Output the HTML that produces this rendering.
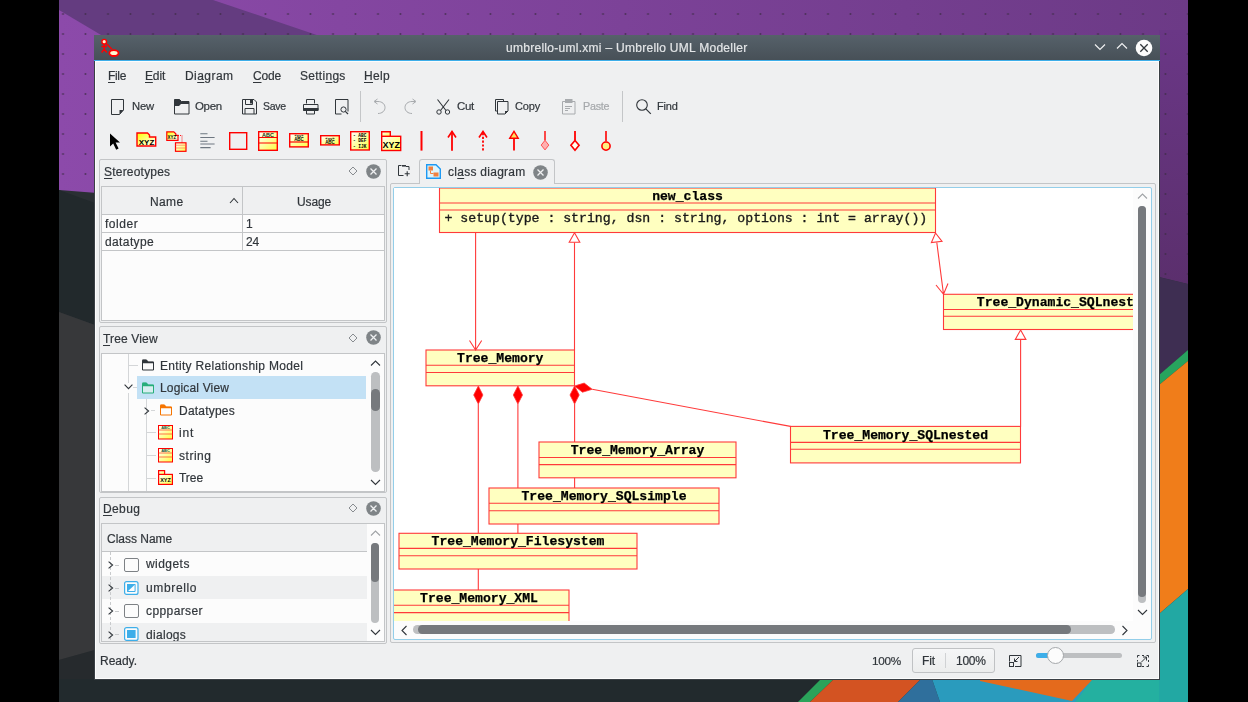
<!DOCTYPE html>
<html><head><meta charset="utf-8">
<style>
*{box-sizing:border-box}
html,body{margin:0;padding:0}
body{width:1248px;height:702px;overflow:hidden;position:relative;background:#000;font-family:"Liberation Sans",sans-serif;color:#31363b}
.a{position:absolute}
.t{position:absolute;white-space:nowrap;line-height:1;font-size:12px;will-change:transform;-webkit-text-stroke:0.2px currentColor}
svg{position:absolute;overflow:visible}
.u{text-decoration:underline;text-decoration-thickness:1px;text-underline-offset:2px}
</style></head><body>
<svg class="a" style="left:0;top:0" width="1248" height="702" viewBox="0 0 1248 702">
  <defs>
    <linearGradient id="gp" x1="0" y1="0" x2="1" y2="0">
      <stop offset="0" stop-color="#8c4aaa"/><stop offset="1" stop-color="#6c3a86"/>
    </linearGradient>
    <pattern id="dots" x="0" y="4" width="22.5" height="20" patternUnits="userSpaceOnUse">
      <circle cx="18" cy="10" r="1" fill="#3a2a44" opacity="0.75"/>
    </pattern>
  </defs>
  <rect x="59" y="0" width="1129" height="702" fill="url(#gp)"/>
  <polygon points="59,0 213,0 420,70 160,70 59,10" fill="#643c80"/>
  <linearGradient id="gr" x1="0" y1="0" x2="0" y2="1"><stop offset="0" stop-color="#6a3786"/><stop offset="1" stop-color="#5b2f6d"/></linearGradient>
  <polygon points="1159,30 1188,30 1188,284 1159,277" fill="url(#gr)"/>
  <rect x="59" y="0" width="1129" height="300" fill="url(#dots)"/>
  <polygon points="59,190 1159,277 1188,284 1188,702 59,702" fill="#2a2f33"/>
  <polygon points="59,190 95,203 95,325 59,312" fill="#22292c"/>
  <polygon points="59,312 95,325 95,650 59,660" fill="#37383a"/>
  <polygon points="59,660 95,650 95,702 59,702" fill="#262a2d"/>
  <polygon points="1159,277 1188,284 1188,350 1159,375" fill="#3e2e52"/>
  <polygon points="1159,375 1188,350 1188,361 1159,385" fill="#27a35e"/>
  <polygon points="1159,385 1188,361 1188,589 1159,614" fill="#f07d1a"/>
  <polygon points="1159,614 1188,589 1188,702 1159,702" fill="#22a8a3"/>
  <polygon points="59,679 821,679 798,702 59,702" fill="#222a2d"/>
  <polygon points="821,679 834,679 810,702 798,702" fill="#2aa35a"/>
  <polygon points="834,679 921,679 898,702 810,702" fill="#d35322"/>
  <polygon points="921,679 932,679 940,702 898,702" fill="#2f6f9c"/>
  <polygon points="932,679 1159,679 1159,702 940,702" fill="#2a9bbd"/>
  <polygon points="980,679 1093,679 1072,701 980,681" fill="#e46a1c"/>
  <polygon points="1093,679 1159,679 1159,702 1075,702" fill="#24b0a0"/>
</svg>
<div class="a" style="left:94px;top:35px;width:1066px;height:645px;background:#eff0f1;border:1px solid #3a3f44;border-top:none;box-shadow:inset 1px -1px 0 #fcfcfc, inset -1px 0 0 #fcfcfc"></div>
<div class="a" style="left:94px;top:35px;width:1066px;height:25px;background:linear-gradient(#56616a,#475057);"></div>
<div class="a" style="left:94px;top:59.5px;width:1066px;height:1.5px;background:#3daee9;"></div>
<div class="a" style="left:95px;top:61px;width:1064px;height:1px;background:#fcfcfc;"></div>
<div class="t" style="left:506.30px;top:42.00px;font-size:12px;color:#e3e5e7;letter-spacing:0.279px;">umbrello-uml.xmi – Umbrello UML Modeller</div>
<svg style="left:98px;top:37px" width="20" height="20" viewBox="0 0 20 20"><circle cx="6.2" cy="4.7" r="2.3" fill="#fff8d0" stroke="#ff0000" stroke-width="1.4"/>
  <path d="M6.2 7v5.5 M3.5 9.5h5.5 M6.2 12.3l-2.6 3.2 M6.2 12.3l2.6 3.2 M8 6.2l6 6" stroke="#ff0000" stroke-width="1.4" fill="none"/>
  <ellipse cx="15.9" cy="16.1" rx="4.6" ry="2.9" fill="#fff8d0" stroke="#ff0000" stroke-width="1.8"/></svg>
<svg style="left:1094px;top:43px" width="12" height="8" viewBox="0 0 12 8"><path d="M1 1.5l5 5 5-5" stroke="#eff0f1" stroke-width="1.2" fill="none"/></svg>
<svg style="left:1116px;top:42px" width="12" height="8" viewBox="0 0 12 8"><path d="M1 6.5l5-5 5 5" stroke="#eff0f1" stroke-width="1.2" fill="none"/></svg>
<svg style="left:1135px;top:39px" width="18" height="18" viewBox="0 0 18 18"><circle cx="9" cy="9" r="8.3" fill="#fcfcfc"/><path d="M5.3 5.3l7.4 7.4 M12.7 5.3l-7.4 7.4" stroke="#31363b" stroke-width="1.3"/></svg>
<div class="t" style="left:107.60px;top:70.00px;font-size:12.0px;letter-spacing:-0.315px;"><span class="u">F</span>ile</div>
<div class="t" style="left:145.40px;top:70.00px;font-size:12px;letter-spacing:-0.157px;"><span class="u">E</span>dit</div>
<div class="t" style="left:185.00px;top:70.00px;font-size:12px;letter-spacing:0.440px;">Di<span class="u">a</span>gram</div>
<div class="t" style="left:252.70px;top:70.00px;font-size:12px;letter-spacing:-0.163px;"><span class="u">C</span>ode</div>
<div class="t" style="left:299.70px;top:70.00px;font-size:12px;letter-spacing:0.279px;">Setti<span class="u">n</span>gs</div>
<div class="t" style="left:363.80px;top:70.00px;font-size:12px;letter-spacing:0.337px;"><span class="u">H</span>elp</div>
<svg style="left:111px;top:99px" width="14" height="16" viewBox="0 0 14 16"><path d="M0.5 0.5h12v10.5l-4 4.5h-8z" fill="none" stroke="#31363b"/><path d="M12.5 11l-4 4.5v-4.5z" fill="#31363b"/></svg>
<div class="t" style="left:131.70px;top:101.00px;font-size:11.25px;letter-spacing:-0.200px;">New</div>
<svg style="left:174px;top:99px" width="16" height="16" viewBox="0 0 16 16"><path d="M0.5 0.5h5l2 2h7.5v12.5h-14.5z" fill="none" stroke="#31363b"/><path d="M0.5 0.5h5l2 2h7.5v2.5h-8l-2 2h-4.5z" fill="#31363b"/></svg>
<div class="t" style="left:195.40px;top:101.00px;font-size:11.5px;letter-spacing:-0.336px;">Open</div>
<svg style="left:242px;top:99px" width="16" height="16" viewBox="0 0 16 16"><path d="M0.5 0.5h11.5l2.5 2.5v12h-14z" fill="none" stroke="#31363b"/><path d="M3.5 0.5v5h7v-5 M3 15v-5.5h9v5.5" fill="none" stroke="#31363b"/><rect x="8" y="1" width="2" height="3.5" fill="#31363b"/></svg>
<div class="t" style="left:263.00px;top:101.00px;font-size:10.5px;letter-spacing:-0.312px;">Save</div>
<svg style="left:303px;top:99px" width="16" height="16" viewBox="0 0 16 16"><path d="M3.5 4.5v-4h8v4" fill="none" stroke="#31363b"/><path d="M0.5 5.5h14.5v6h-14.5z" fill="none" stroke="#31363b"/><rect x="0" y="9" width="15.5" height="2.5" fill="#31363b"/><path d="M3.5 11.5v3.5h8v-3.5" fill="none" stroke="#31363b"/></svg>
<svg style="left:334.5px;top:99px" width="14" height="16" viewBox="0 0 14 16"><path d="M0.5 0.5h12.5v12 M0.5 0.5v14.5h6" fill="none" stroke="#31363b"/><circle cx="8.5" cy="10.5" r="2.6" fill="none" stroke="#31363b"/><path d="M10.3 12.3l2.7 2.7" stroke="#31363b" stroke-width="1.2"/></svg>
<div class="a" style="left:360px;top:91px;width:1px;height:31px;background:#c4c6c8;"></div>
<svg style="left:373px;top:99px" width="14" height="16" viewBox="0 0 14 16"><path d="M5 14.5c4 0 7-2.5 7-6s-3-6-7-6h-3" fill="none" stroke="#a8abae"/><path d="M4.5 0l-3.5 2.5 3.5 2.5" fill="none" stroke="#a8abae"/></svg>
<svg style="left:403px;top:99px" width="14" height="16" viewBox="0 0 14 16"><path d="M9 14.5c-4 0-7-2.5-7-6s3-6 7-6h3" fill="none" stroke="#a8abae"/><path d="M9.5 0l3.5 2.5-3.5 2.5" fill="none" stroke="#a8abae"/></svg>
<svg style="left:436px;top:99px" width="15" height="16" viewBox="0 0 15 16"><path d="M1.5 0.5l8.5 11 M13 0.5l-8.5 11" fill="none" stroke="#31363b" stroke-width="1.1"/><circle cx="3" cy="13" r="2.2" fill="none" stroke="#31363b"/><circle cx="11.5" cy="13" r="2.2" fill="none" stroke="#31363b"/></svg>
<div class="t" style="left:456.70px;top:101.00px;font-size:11.5px;letter-spacing:-0.295px;">Cut</div>
<svg style="left:495px;top:99px" width="15" height="16" viewBox="0 0 15 16"><path d="M0.5 0.5h8v2 M0.5 0.5v11.5h2" fill="none" stroke="#31363b"/><path d="M2.5 2.5h10.5v9.5l-3 3h-7.5z" fill="#eff0f1" stroke="#31363b"/><path d="M13 12l-3 3v-3z" fill="#31363b"/></svg>
<div class="t" style="left:515.40px;top:101.00px;font-size:11.0px;letter-spacing:-0.163px;">Copy</div>
<svg style="left:561.5px;top:99px" width="14" height="16" viewBox="0 0 14 16"><path d="M0.5 2.5h12.5v12.5h-12.5z" fill="none" stroke="#a8abae"/><rect x="3" y="0" width="7.5" height="4" fill="#a8abae"/><path d="M3 7.5h7 M3 9.5h5 M3 11.5h3" stroke="#a8abae"/></svg>
<div class="t" style="left:582.70px;top:101.00px;font-size:10.75px;color:#a5a8ab;letter-spacing:-0.250px;">Paste</div>
<div class="a" style="left:622px;top:91px;width:1px;height:31px;background:#c4c6c8;"></div>
<svg style="left:635.5px;top:99px" width="16" height="16" viewBox="0 0 16 16"><circle cx="6" cy="6" r="5.3" fill="none" stroke="#31363b" stroke-width="1.1"/><path d="M9.8 9.8l5 5" stroke="#31363b" stroke-width="1.2"/></svg>
<div class="t" style="left:657.40px;top:101.00px;font-size:11.0px;letter-spacing:-0.202px;">Find</div>
<svg style="left:0;top:0" width="0" height="0"><defs><linearGradient id="yg" x1="0" y1="0" x2="1" y2="1"><stop offset="0" stop-color="#ffff00"/><stop offset="0.6" stop-color="#ffffa0"/><stop offset="1" stop-color="#ffffff"/></linearGradient><linearGradient id="yg2" x1="0" y1="0" x2="1" y2="1"><stop offset="0" stop-color="#ffffff"/><stop offset="1" stop-color="#ffff40"/></linearGradient></defs></svg>
<svg style="left:109px;top:133px" width="12" height="17" viewBox="0 0 12 17"><path d="M1 0.5v13l3.2-3 3 6.3 2.4-1.2-3-6h4.4z" fill="#000"/></svg>
<svg style="left:135.5px;top:132px" width="21" height="15" viewBox="0 0 21 15"><path d="M1 1h10.5l2 2v2h6.2v9h-18.7z" fill="url(#yg)" stroke="#ff0000" stroke-width="1.4"/><text x="10.5" y="12.6" font-family="Liberation Sans" font-weight="bold" font-size="8" text-anchor="middle" fill="#000">XYZ</text></svg>
<svg style="left:166px;top:130.5px" width="21" height="21" viewBox="0 0 21 21"><path d="M0.8 0.8h7l2 2v1.5h2.2v5h-11.2z" fill="url(#yg)" stroke="#ff0000" stroke-width="1.2"/><text x="6" y="8.3" font-family="Liberation Sans" font-weight="bold" font-size="4.5" text-anchor="middle" fill="#000">XYZ</text><path d="M12 4.5h4v7" stroke="#ff0000" stroke-width="0.9" stroke-dasharray="1,1" fill="none"/><rect x="9.5" y="11.8" width="10.5" height="8.5" fill="url(#yg2)" stroke="#ff0000" stroke-width="1.2"/><path d="M9.5 14.2h10.5 M9.5 17h10.5" stroke="#ff6040" stroke-width="0.6"/></svg>
<svg style="left:199.5px;top:133px" width="15" height="16" viewBox="0 0 15 16"><path d="M0.3 0.8h7.2 M0.3 4.5h14.3 M0.3 8.2h7.2 M0.3 11h14.3 M0.3 14.6h10.3" stroke="#6e7781" stroke-width="1.1"/></svg>
<svg style="left:228.5px;top:132px" width="18.5" height="18" viewBox="0 0 18.5 18"><rect x="0.7" y="0.7" width="17" height="16.6" fill="none" stroke="#ff0000" stroke-width="1.4"/></svg>
<svg style="left:258px;top:131px" width="20" height="20" viewBox="0 0 20 20"><rect x="0.7" y="0.7" width="18.6" height="18.6" fill="url(#yg2)" stroke="#ff0000" stroke-width="1.4"/><path d="M0.7 6.5h18.6 M0.7 12h18.6" stroke="#ff0000" stroke-width="1.2"/><text x="10" y="5.6" font-family="Liberation Sans" font-weight="bold" font-size="5.5" text-anchor="middle" fill="#203020">ABC</text></svg>
<svg style="left:289px;top:133.3px" width="20" height="14.6" viewBox="0 0 20 14.6"><rect x="0.7" y="0.7" width="18.6" height="13.2" fill="url(#yg2)" stroke="#ff0000" stroke-width="1.4"/><path d="M0.7 9h18.6" stroke="#ff0000" stroke-width="1.2"/><text x="10" y="4.2" font-family="Liberation Sans" font-weight="bold" font-size="4" text-anchor="middle" fill="#000">«xy»</text><text x="10" y="8" font-family="Liberation Sans" font-weight="bold" font-size="4.5" text-anchor="middle" fill="#000">ABC</text></svg>
<svg style="left:319.5px;top:135.2px" width="20" height="10.6" viewBox="0 0 20 10.6"><rect x="0.7" y="0.7" width="18.6" height="9.2" fill="url(#yg2)" stroke="#ff0000" stroke-width="1.4"/><text x="10" y="4.6" font-family="Liberation Sans" font-weight="bold" font-size="4.2" text-anchor="middle" fill="#000">«xy»</text><text x="10" y="8.7" font-family="Liberation Sans" font-weight="bold" font-size="4.5" text-anchor="middle" fill="#000">ABC</text></svg>
<svg style="left:350.2px;top:131px" width="20" height="19.7" viewBox="0 0 20 19.7"><rect x="0.7" y="0.7" width="18.6" height="18.3" fill="url(#yg2)" stroke="#ff0000" stroke-width="1.4"/><text x="3" y="6" font-family="Liberation Mono" font-weight="bold" font-size="4.5" fill="#000">-  ABC</text><text x="3" y="11.5" font-family="Liberation Mono" font-weight="bold" font-size="4.5" fill="#000">-  DEF</text><text x="3" y="17" font-family="Liberation Mono" font-weight="bold" font-size="4.5" fill="#000">-  IJK</text></svg>
<svg style="left:381px;top:131px" width="20" height="20" viewBox="0 0 20 20"><path d="M0.7 5.4v-4.7h8.6v4.7" fill="url(#yg2)" stroke="#ff0000" stroke-width="1.4"/><rect x="0.7" y="5.3" width="19" height="14.2" fill="url(#yg2)" stroke="#ff0000" stroke-width="1.4"/><text x="10.3" y="16.8" font-family="Liberation Sans" font-weight="bold" font-size="9" text-anchor="middle" fill="#000">XYZ</text></svg>
<svg style="left:416px;top:130px" width="12" height="22" viewBox="0 0 12 22"><path d="M5.5 1v19.6" stroke="#ff0000" stroke-width="2"/></svg>
<svg style="left:446px;top:130px" width="12" height="22" viewBox="0 0 12 22"><path d="M6 1.5v19.2" stroke="#ff0000" stroke-width="1.8"/><path d="M2 7.5l4-6 4 6" stroke="#ff0000" stroke-width="1.6" fill="none"/></svg>
<svg style="left:477px;top:130px" width="12" height="22" viewBox="0 0 12 22"><path d="M6 3v17.6" stroke="#ff0000" stroke-width="1.8" stroke-dasharray="2.2,1.6"/><path d="M2 7.5l4-6 4 6" stroke="#ff0000" stroke-width="1.6" fill="none"/></svg>
<svg style="left:507.5px;top:130px" width="12" height="22" viewBox="0 0 12 22"><path d="M6 8v12.6" stroke="#ff0000" stroke-width="1.8"/><path d="M1.8 8.2l4.2-6.8 4.2 6.8z" stroke="#ff0000" stroke-width="1.4" fill="#ffe060"/></svg>
<svg style="left:538.5px;top:130px" width="12" height="22" viewBox="0 0 12 22"><path d="M6 1v9.5" stroke="#ff0000" stroke-width="1.4"/><path d="M6 10.3l3.8 4.8-3.8 4.8-3.8-4.8z" stroke="#ff5050" stroke-width="1" fill="#ffb0b0"/></svg>
<svg style="left:569px;top:130px" width="12" height="22" viewBox="0 0 12 22"><path d="M6 1v9.5" stroke="#ff0000" stroke-width="1.8"/><path d="M6 10.4l4.1 4.9-4.1 4.9-4.1-4.9z" stroke="#ff0000" stroke-width="1.6" fill="#fffff0"/></svg>
<svg style="left:599.5px;top:130px" width="12" height="22" viewBox="0 0 12 22"><path d="M6 1v10.5" stroke="#ff0000" stroke-width="1.6"/><circle cx="6" cy="16.1" r="4.1" stroke="#ff0000" stroke-width="1.6" fill="#fff080"/></svg>
<div class="a" style="left:99px;top:159px;width:288px;height:164px;background:#eff0f1;border:1px solid #c3c5c7;border-radius:2px"></div>
<div class="t" style="left:103.70px;top:166.00px;font-size:12px;letter-spacing:0.208px;"><span class="u">S</span>tereotypes</div>
<svg style="left:347.7px;top:166px" width="10" height="10" viewBox="0 0 10 10"><path d="M5 1l4 4-4 4-4-4z" fill="none" stroke="#888c90" stroke-width="1"/></svg>
<svg style="left:366.3px;top:163.5px" width="15" height="15" viewBox="0 0 15 15"><circle cx="7.5" cy="7.5" r="7.3" fill="#7f8487"/><path d="M4.5 4.5l6 6 M10.5 4.5l-6 6" stroke="#eff0f1" stroke-width="1.3"/></svg>
<div class="a" style="left:101px;top:186px;width:284px;height:135px;background:#fcfcfc;border:1px solid #c3c5c7"></div>
<div class="a" style="left:102px;top:187px;width:282px;height:28px;background:#eff0f1;border-bottom:1px solid #c3c5c7"></div>
<div class="a" style="left:242px;top:187px;width:1px;height:64px;background:#c3c5c7;"></div>
<div class="a" style="left:102px;top:232px;width:282px;height:1px;background:#c3c5c7;"></div>
<div class="a" style="left:102px;top:250px;width:282px;height:1px;background:#c3c5c7;"></div>
<div class="t" style="left:149.50px;top:196.00px;font-size:12px;letter-spacing:0.361px;">Name</div>
<svg style="left:228.5px;top:197px" width="10" height="7" viewBox="0 0 10 7"><path d="M1 6l4-4.5 4 4.5" fill="none" stroke="#31363b" stroke-width="1.1"/></svg>
<div class="t" style="left:296.50px;top:196.00px;font-size:12px;letter-spacing:-0.122px;">Usage</div>
<div class="t" style="left:104.60px;top:218.00px;font-size:12px;letter-spacing:0.537px;">folder</div>
<div class="t" style="left:245.90px;top:218.00px;font-size:12px;">1</div>
<div class="t" style="left:104.60px;top:236.00px;font-size:12px;letter-spacing:0.383px;">datatype</div>
<div class="t" style="left:245.90px;top:236.00px;font-size:12px;letter-spacing:-0.144px;">24</div>
<div class="a" style="left:99px;top:326px;width:288px;height:167px;background:#eff0f1;border:1px solid #c3c5c7;border-radius:2px"></div>
<div class="t" style="left:103.40px;top:333.00px;font-size:12px;letter-spacing:0.155px;"><span class="u">T</span>ree View</div>
<svg style="left:347.7px;top:332.5px" width="10" height="10" viewBox="0 0 10 10"><path d="M5 1l4 4-4 4-4-4z" fill="none" stroke="#888c90" stroke-width="1"/></svg>
<svg style="left:366.3px;top:330.0px" width="15" height="15" viewBox="0 0 15 15"><circle cx="7.5" cy="7.5" r="7.3" fill="#7f8487"/><path d="M4.5 4.5l6 6 M10.5 4.5l-6 6" stroke="#eff0f1" stroke-width="1.3"/></svg>
<div class="a" style="left:101px;top:353px;width:284px;height:139px;background:#fcfcfc;border:1px solid #c3c5c7"></div>
<div class="a" style="left:128px;top:353.5px;width:1px;height:29px;background:#d4d6d8;"></div>
<div class="a" style="left:128px;top:393px;width:1px;height:98px;background:#d4d6d8;"></div>
<div class="a" style="left:128.5px;top:364.5px;width:9px;height:1px;background:#d4d6d8;"></div>
<div class="a" style="left:146px;top:399px;width:1px;height:92px;background:#d4d6d8;"></div>
<div class="a" style="left:146.5px;top:432px;width:9px;height:1px;background:#d4d6d8;"></div>
<div class="a" style="left:146.5px;top:455px;width:9px;height:1px;background:#d4d6d8;"></div>
<div class="a" style="left:146.5px;top:477.5px;width:9px;height:1px;background:#d4d6d8;"></div>
<div class="a" style="left:151px;top:410px;width:4px;height:1px;background:#d4d6d8;"></div>
<div class="a" style="left:133px;top:387px;width:4px;height:1px;background:#d4d6d8;"></div>
<div class="a" style="left:137.3px;top:376.3px;width:229px;height:22.4px;background:#c3e1f5;"></div>
<svg style="left:141.5px;top:359px" width="12" height="12" viewBox="0 0 12 12"><path d="M0.5 1.5v9.5h11v-8h-5.5l-1.5-2h-4z" fill="none" stroke="#31363b"/><path d="M0.5 0.8h4l1.5 2h5.5v1.5h-11z" fill="#31363b"/></svg>
<div class="t" style="left:160.30px;top:360.00px;font-size:12px;letter-spacing:0.313px;">Entity Relationship Model</div>
<svg style="left:124px;top:384px" width="9" height="6" viewBox="0 0 9 6"><path d="M0.6 0.6l3.9 4 3.9-4" fill="none" stroke="#31363b" stroke-width="1.1"/></svg>
<svg style="left:141.5px;top:382px" width="12" height="12" viewBox="0 0 12 12"><path d="M0.5 1.5v9.5h11v-8h-5.5l-1.5-2h-4z" fill="#d8eef0" stroke="#27ae7a"/><path d="M0.5 0.8h4l1.5 2h5.5v1.5h-11z" fill="#27ae7a"/></svg>
<div class="t" style="left:160.30px;top:382.00px;font-size:12px;letter-spacing:0.159px;">Logical View</div>
<svg style="left:143.5px;top:406.5px" width="6" height="8" viewBox="0 0 6 8"><path d="M0.6 0.6l4 3.4-4 3.4" fill="none" stroke="#31363b" stroke-width="1.1"/></svg>
<svg style="left:159.5px;top:404px" width="12" height="12" viewBox="0 0 12 12"><path d="M0.5 1.5v9.5h11v-8h-5.5l-1.5-2h-4z" fill="#fcfcfc" stroke="#f67400"/><path d="M0.5 0.8h4l1.5 2h5.5v1.5h-11z" fill="#f67400"/></svg>
<div class="t" style="left:178.50px;top:405.00px;font-size:12px;letter-spacing:0.211px;">Datatypes</div>
<svg style="left:158px;top:425px" width="15" height="14.5" viewBox="0 0 15 14.5"><rect x="0.5" y="0.5" width="14" height="13.5" fill="url(#yg2)" stroke="#ff0000" stroke-width="1"/><path d="M0.6 5h13.8 M0.6 9h13.8" stroke="#ff5030" stroke-width="0.8"/><text x="7.5" y="4.3" font-family="Liberation Sans" font-weight="bold" font-size="4" text-anchor="middle" fill="#205040">ABC</text></svg>
<div class="t" style="left:178.50px;top:427.00px;font-size:12px;letter-spacing:0.814px;">int</div>
<svg style="left:158px;top:447.5px" width="15" height="14.5" viewBox="0 0 15 14.5"><rect x="0.5" y="0.5" width="14" height="13.5" fill="url(#yg2)" stroke="#ff0000" stroke-width="1"/><path d="M0.6 5h13.8 M0.6 9h13.8" stroke="#ff5030" stroke-width="0.8"/><text x="7.5" y="4.3" font-family="Liberation Sans" font-weight="bold" font-size="4" text-anchor="middle" fill="#205040">ABC</text></svg>
<div class="t" style="left:178.50px;top:450.00px;font-size:12px;letter-spacing:0.531px;">string</div>
<svg style="left:158px;top:470px" width="15" height="15" viewBox="0 0 15 15"><path d="M0.6 4.5v-3.9h6v3.9" fill="url(#yg2)" stroke="#ff0000" stroke-width="1.2"/><rect x="0.6" y="4.4" width="13.8" height="10" fill="url(#yg2)" stroke="#ff0000" stroke-width="1.2"/><text x="7.5" y="12.3" font-family="Liberation Sans" font-weight="bold" font-size="5.5" text-anchor="middle" fill="#000">XYZ</text></svg>
<div class="t" style="left:178.50px;top:472.00px;font-size:12px;letter-spacing:-0.011px;">Tree</div>
<svg style="left:370px;top:359.5px" width="11" height="7" viewBox="0 0 11 7"><path d="M1 5.5l4.5-4.5 4.5 4.5" fill="none" stroke="#31363b" stroke-width="1.1"/></svg>
<div class="a" style="left:371.2px;top:372.4px;width:8.6px;height:100px;background:#bdbfc1;border-radius:4.3px"></div>
<div class="a" style="left:371.2px;top:388.6px;width:8.6px;height:22.4px;background:#76797d;border-radius:4.3px"></div>
<svg style="left:370px;top:479px" width="11" height="7" viewBox="0 0 11 7"><path d="M1 1l4.5 4.5 4.5-4.5" fill="none" stroke="#31363b" stroke-width="1.1"/></svg>
<div class="a" style="left:99px;top:497px;width:288px;height:147px;background:#eff0f1;border:1px solid #c3c5c7;border-radius:2px"></div>
<div class="t" style="left:103.40px;top:503.00px;font-size:12px;letter-spacing:0.385px;"><span class="u">D</span>ebug</div>
<svg style="left:347.8px;top:503.2px" width="10" height="10" viewBox="0 0 10 10"><path d="M5 1l4 4-4 4-4-4z" fill="none" stroke="#888c90" stroke-width="1"/></svg>
<svg style="left:366.2px;top:500.7px" width="15" height="15" viewBox="0 0 15 15"><circle cx="7.5" cy="7.5" r="7.3" fill="#7f8487"/><path d="M4.5 4.5l6 6 M10.5 4.5l-6 6" stroke="#eff0f1" stroke-width="1.3"/></svg>
<div class="a" style="left:101px;top:523px;width:284px;height:119px;background:#fcfcfc;border:1px solid #c3c5c7"></div>
<div class="a" style="left:102px;top:524px;width:265px;height:28px;background:#eff0f1;border-bottom:1px solid #c3c5c7"></div>
<div class="t" style="left:106.90px;top:533.00px;font-size:12px;letter-spacing:-0.007px;">Class Name</div>
<div class="a" style="left:102px;top:576px;width:265px;height:23px;background:#eff0f1;"></div>
<div class="a" style="left:102px;top:623px;width:265px;height:18px;background:#eff0f1;"></div>
<div class="a" style="left:109.5px;top:552px;width:1px;height:88px;background:repeating-linear-gradient(#c8cacc 0 3px,transparent 3px 5px);"></div>
<svg style="left:107.5px;top:561.0px" width="6" height="8" viewBox="0 0 6 8"><path d="M0.6 0.6l4 3.4-4 3.4" fill="none" stroke="#31363b" stroke-width="1.1"/></svg>
<div class="a" style="left:115px;top:564.6px;width:4px;height:1px;background:#c8cacc;"></div>
<div class="a" style="left:124px;top:557.6px;width:14.6px;height:14px;background:#fcfcfc;border:1px solid #7d8185;border-radius:2px"></div>
<svg style="left:107.5px;top:584.1999999999999px" width="6" height="8" viewBox="0 0 6 8"><path d="M0.6 0.6l4 3.4-4 3.4" fill="none" stroke="#31363b" stroke-width="1.1"/></svg>
<div class="a" style="left:115px;top:587.8px;width:4px;height:1px;background:#c8cacc;"></div>
<svg style="left:124px;top:580.8px" width="15" height="14" viewBox="0 0 15 14"><rect x="0.6" y="0.6" width="13.4" height="12.8" rx="2" fill="#fcfcfc" stroke="#3daee9" stroke-width="1.2"/><path d="M3 3h8.6l-8.6 8z" fill="#3daee9"/><path d="M3.5 3.5h7.6v7h-7.6z" fill="none" stroke="#3daee9" stroke-width="1"/></svg>
<svg style="left:107.5px;top:607.4px" width="6" height="8" viewBox="0 0 6 8"><path d="M0.6 0.6l4 3.4-4 3.4" fill="none" stroke="#31363b" stroke-width="1.1"/></svg>
<div class="a" style="left:115px;top:611px;width:4px;height:1px;background:#c8cacc;"></div>
<div class="a" style="left:124px;top:604px;width:14.6px;height:14px;background:#fcfcfc;border:1px solid #7d8185;border-radius:2px"></div>
<svg style="left:107.5px;top:630.6px" width="6" height="8" viewBox="0 0 6 8"><path d="M0.6 0.6l4 3.4-4 3.4" fill="none" stroke="#31363b" stroke-width="1.1"/></svg>
<div class="a" style="left:115px;top:634.2px;width:4px;height:1px;background:#c8cacc;"></div>
<svg style="left:124px;top:627.2px" width="15" height="14" viewBox="0 0 15 14"><rect x="0.6" y="0.6" width="13.4" height="12.8" rx="2" fill="#fcfcfc" stroke="#3daee9" stroke-width="1.2"/><rect x="3" y="3" width="8.6" height="8" fill="#3daee9"/></svg>
<div class="t" style="left:146.00px;top:558.00px;font-size:12px;letter-spacing:0.452px;">widgets</div>
<div class="t" style="left:146.00px;top:582.00px;font-size:12px;letter-spacing:0.638px;">umbrello</div>
<div class="t" style="left:146.00px;top:605.00px;font-size:12px;letter-spacing:0.405px;">cppparser</div>
<div class="a" style="left:102px;top:625px;width:200px;height:15.5px;overflow:hidden">
<div class="t" style="left:44px;top:4.14px;font-size:12px;letter-spacing:0.3px">dialogs</div></div>
<svg style="left:370px;top:529.5px" width="11" height="7" viewBox="0 0 11 7"><path d="M1 5.5l4.5-4.5 4.5 4.5" fill="none" stroke="#a0a3a6" stroke-width="1.1"/></svg>
<div class="a" style="left:370.7px;top:542.5px;width:8.6px;height:80px;background:#bdbfc1;border-radius:4.3px"></div>
<div class="a" style="left:370.7px;top:542.5px;width:8.6px;height:39px;background:#76797d;border-radius:4.3px"></div>
<svg style="left:370px;top:629px" width="11" height="7" viewBox="0 0 11 7"><path d="M1 1l4.5 4.5 4.5-4.5" fill="none" stroke="#31363b" stroke-width="1.1"/></svg>
<div class="t" style="left:99.70px;top:655.00px;font-size:12px;letter-spacing:-0.025px;">Ready.</div>
<div class="t" style="left:872.00px;top:655.00px;font-size:11.75px;letter-spacing:-0.249px;">100%</div>
<div class="a" style="left:912.4px;top:648px;width:82.5px;height:24.6px;background:linear-gradient(#f5f6f7,#eceded);border:1px solid #c0c2c4;border-radius:3px"></div>
<div class="a" style="left:944.5px;top:653px;width:1px;height:15px;background:#d0d2d4;"></div>
<div class="t" style="left:922.00px;top:655.00px;font-size:12px;letter-spacing:-0.164px;">Fit</div>
<div class="t" style="left:955.70px;top:655.00px;font-size:12.0px;letter-spacing:-0.296px;">100%</div>
<svg style="left:1008.5px;top:654.5px" width="13" height="12" viewBox="0 0 13 12"><path d="M0.5 0.5h11.5v11h-6 M0.5 0.5v6" fill="none" stroke="#31363b"/><rect x="0.5" y="7.5" width="4" height="4" fill="none" stroke="#31363b"/><path d="M10 2l-4.5 4.5 M5.5 3.5v3h3" fill="none" stroke="#31363b"/></svg>
<div class="a" style="left:1035.5px;top:653.2px;width:86.5px;height:5.3px;background:#bdbfc1;border-radius:2.7px"></div>
<div class="a" style="left:1035.5px;top:653.2px;width:20px;height:5.3px;background:#3daee9;border-radius:2.7px"></div>
<svg style="left:1046.5px;top:647.3px" width="17" height="17" viewBox="0 0 17 17"><circle cx="8.5" cy="8.5" r="8" fill="#fcfcfc" stroke="#a5a8ab" stroke-width="1"/></svg>
<svg style="left:1137px;top:654.5px" width="12" height="12" viewBox="0 0 12 12"><path d="M0.5 2.5v-2h2 M5 0.5h2 M9.5 0.5h2v2 M11.5 5v2 M11.5 9.5v2h-2 M7 11.5h-2 M0.5 5v1.5" fill="none" stroke="#31363b"/><rect x="0.5" y="8" width="3.5" height="3.5" fill="none" stroke="#31363b"/><path d="M4.5 7l5-5 M9.5 5.5v-3.5h-3.5" fill="none" stroke="#31363b"/></svg>
<div class="a" style="left:419px;top:159px;width:136px;height:25px;background:#eff0f1;border:1px solid #c3c5c7;border-bottom:none;border-radius:3px 3px 0 0"></div>
<svg style="left:397.5px;top:165px" width="13" height="12" viewBox="0 0 13 12"><path d="M3.5 0.5h-3v10h5" fill="none" stroke="#31363b"/><rect x="4" y="0" width="4" height="1.6" fill="#31363b"/><path d="M8 1.5h3v3.5" fill="none" stroke="#31363b"/><path d="M9.2 6.3v5 M6.7 8.8h5" stroke="#31363b" stroke-width="1.1"/></svg>
<svg style="left:426px;top:163.5px" width="15" height="15" viewBox="0 0 15 15"><path d="M0.7 0.7h9.3l4.3 4.3v9.3h-13.6z" fill="#dff4fb" stroke="#1d99f3" stroke-width="1.4"/><rect x="2.5" y="2.5" width="4.5" height="4" fill="#f08040"/><rect x="7.5" y="8.5" width="5" height="4" fill="#f08040"/><path d="M4.5 6.5v3h3" stroke="#f08040" fill="none"/></svg>
<div class="t" style="left:447.80px;top:166.00px;font-size:12px;letter-spacing:0.272px;">cl<span class="u">a</span>ss diagram</div>
<svg style="left:532.9px;top:164.5px" width="15" height="15" viewBox="0 0 15 15"><circle cx="7.5" cy="7.5" r="7.3" fill="#7f8487"/><path d="M4.5 4.5l6 6 M10.5 4.5l-6 6" stroke="#eff0f1" stroke-width="1.3"/></svg>
<div class="a" style="left:390px;top:183px;width:766px;height:460px;background:#eff0f1;border:1px solid #c3c5c7;border-radius:2px"></div>
<div class="a" style="left:420px;top:182px;width:134px;height:2px;background:#eff0f1;"></div>
<div class="a" style="left:393px;top:187px;width:759px;height:453px;background:#fcfcfc;border:1px solid #93cee9;border-radius:2px"></div>
<div class="a" style="left:394px;top:188px;width:739px;height:433px;background:#ffffff;"></div>
<svg style="left:1136.5px;top:193px" width="11" height="7" viewBox="0 0 11 7"><path d="M1 5.5l4.5-4.5 4.5 4.5" fill="none" stroke="#a0a3a6" stroke-width="1.1"/></svg>
<div class="a" style="left:1137.8px;top:206px;width:8.6px;height:396.5px;background:#bdbfc1;border-radius:4.3px"></div>
<div class="a" style="left:1137.8px;top:206px;width:8.6px;height:390.5px;background:#76797d;border-radius:4.3px"></div>
<svg style="left:1136.5px;top:608.5px" width="11" height="7" viewBox="0 0 11 7"><path d="M1 1l4.5 4.5 4.5-4.5" fill="none" stroke="#31363b" stroke-width="1.1"/></svg>
<svg style="left:400.5px;top:624.5px" width="7" height="11" viewBox="0 0 7 11"><path d="M5.5 1l-4.5 4.5 4.5 4.5" fill="none" stroke="#31363b" stroke-width="1.1"/></svg>
<div class="a" style="left:412.8px;top:625.4px;width:702px;height:8.5px;background:#bdbfc1;border-radius:4.3px"></div>
<div class="a" style="left:418px;top:625.4px;width:653.4px;height:8.5px;background:#76797d;border-radius:4.3px"></div>
<svg style="left:1121px;top:624.5px" width="7" height="11" viewBox="0 0 7 11"><path d="M1.5 1l4.5 4.5-4.5 4.5" fill="none" stroke="#31363b" stroke-width="1.1"/></svg>
<svg style="left:0;top:0" width="1248" height="702" viewBox="0 0 1248 702"><defs><clipPath id="cv"><rect x="394" y="188" width="739" height="433"/></clipPath></defs><g clip-path="url(#cv)"><rect x="439.5" y="188" width="496.0" height="44.5" fill="#ffffc0" stroke="#ff3a3a" stroke-width="1.1"/><path d="M439.5 203H935.5 M439.5 210H935.5" stroke="#ff3a3a" stroke-width="1.1"/><text x="687.5" y="199.6" text-anchor="middle" font-family="Liberation Mono" font-weight="bold" font-size="13.1" fill="#000" stroke="#000" stroke-width="0.25">new_class</text><text x="444.5" y="222" font-family="Liberation Mono" font-size="13.2" fill="#1a1a1a" stroke="#1a1a1a" stroke-width="0.35">+ setup(type : string, dsn : string, options : int = array())</text><rect x="943.5" y="294.3" width="239.5" height="35.19999999999999" fill="#ffffc0" stroke="#ff3a3a" stroke-width="1.1"/><path d="M943.5 309.5H1183 M943.5 316.2H1183" stroke="#ff3a3a" stroke-width="1.1"/><text x="1063.25" y="306.1" text-anchor="middle" font-family="Liberation Mono" font-weight="bold" font-size="13.1" fill="#000" stroke="#000" stroke-width="0.25">Tree_Dynamic_SQLnested</text><rect x="426" y="350" width="148.5" height="35.80000000000001" fill="#ffffc0" stroke="#ff3a3a" stroke-width="1.1"/><path d="M426 365.3H574.5 M426 372.5H574.5" stroke="#ff3a3a" stroke-width="1.1"/><text x="500.25" y="361.90000000000003" text-anchor="middle" font-family="Liberation Mono" font-weight="bold" font-size="13.1" fill="#000" stroke="#000" stroke-width="0.25">Tree_Memory</text><rect x="790.5" y="426.4" width="230.0" height="36.5" fill="#ffffc0" stroke="#ff3a3a" stroke-width="1.1"/><path d="M790.5 442.4H1020.5 M790.5 449.2H1020.5" stroke="#ff3a3a" stroke-width="1.1"/><text x="905.5" y="439.0" text-anchor="middle" font-family="Liberation Mono" font-weight="bold" font-size="13.1" fill="#000" stroke="#000" stroke-width="0.25">Tree_Memory_SQLnested</text><rect x="539" y="442" width="197" height="35.80000000000001" fill="#ffffc0" stroke="#ff3a3a" stroke-width="1.1"/><path d="M539 457.5H736 M539 464.6H736" stroke="#ff3a3a" stroke-width="1.1"/><text x="637.5" y="454.1" text-anchor="middle" font-family="Liberation Mono" font-weight="bold" font-size="13.1" fill="#000" stroke="#000" stroke-width="0.25">Tree_Memory_Array</text><rect x="489" y="488" width="230" height="36" fill="#ffffc0" stroke="#ff3a3a" stroke-width="1.1"/><path d="M489 503.2H719 M489 510.8H719" stroke="#ff3a3a" stroke-width="1.1"/><text x="604.0" y="499.8" text-anchor="middle" font-family="Liberation Mono" font-weight="bold" font-size="13.1" fill="#000" stroke="#000" stroke-width="0.25">Tree_Memory_SQLsimple</text><rect x="399" y="533.3" width="238" height="35.700000000000045" fill="#ffffc0" stroke="#ff3a3a" stroke-width="1.1"/><path d="M399 548.4H637 M399 555.7H637" stroke="#ff3a3a" stroke-width="1.1"/><text x="518.0" y="545.0" text-anchor="middle" font-family="Liberation Mono" font-weight="bold" font-size="13.1" fill="#000" stroke="#000" stroke-width="0.25">Tree_Memory_Filesystem</text><rect x="389" y="590" width="180" height="50" fill="#ffffc0" stroke="#ff3a3a" stroke-width="1.1"/><path d="M389 605.3H569 M389 612.6H569" stroke="#ff3a3a" stroke-width="1.1"/><text x="479.0" y="601.9" text-anchor="middle" font-family="Liberation Mono" font-weight="bold" font-size="13.1" fill="#000" stroke="#000" stroke-width="0.25">Tree_Memory_XML</text><path d="M475.6 232.5V350 M469.5 340.5L475.6 350L481.7 340.5" fill="none" stroke="#ff3a3a" stroke-width="1.1"/><path d="M574.5 350V242.3" fill="none" stroke="#ff3a3a" stroke-width="1.1"/><path d="M574.5 232.8L579.8 242.3H569.2Z" fill="#fff" stroke="#ff3a3a" stroke-width="1.1"/><path d="M943.5 294.3L936.8 242.5 M936 285L943.5 294.3L948 283.5" fill="none" stroke="#ff3a3a" stroke-width="1.1"/><path d="M935.5 233L942 241.3L931.4 242.6Z" fill="#fff" stroke="#ff3a3a" stroke-width="1.1"/><path d="M1020.6 426.4V339.4" fill="none" stroke="#ff3a3a" stroke-width="1.1"/><path d="M1020.6 330L1025.9 339.4H1015.3Z" fill="#fff" stroke="#ff3a3a" stroke-width="1.1"/><path d="M478.3 386L482.90000000000003 395L478.3 404L473.7 395Z" fill="#ff0000" stroke="#ff3a3a" stroke-width="0.8"/><path d="M517.9 386L522.5 395L517.9 404L513.3 395Z" fill="#ff0000" stroke="#ff3a3a" stroke-width="0.8"/><path d="M574.6 386L579.2 395L574.6 404L570.0 395Z" fill="#ff0000" stroke="#ff3a3a" stroke-width="0.8"/><path d="M478.3 404V533.3 M478.3 569V590" fill="none" stroke="#ff3a3a" stroke-width="1.1"/><path d="M517.9 404V488 M517.9 524V533.3" fill="none" stroke="#ff3a3a" stroke-width="1.1"/><path d="M574.6 404V442 M574.6 477.8V488" fill="none" stroke="#ff3a3a" stroke-width="1.1"/><path d="M574.5 386L584.2 383.1L592.2 389.3L582.5 392.2Z" fill="#ff0000" stroke="#ff3a3a" stroke-width="0.8"/><path d="M592.2 389.3L790.5 426.4" fill="none" stroke="#ff3a3a" stroke-width="1.1"/></g></svg>
</body></html>
